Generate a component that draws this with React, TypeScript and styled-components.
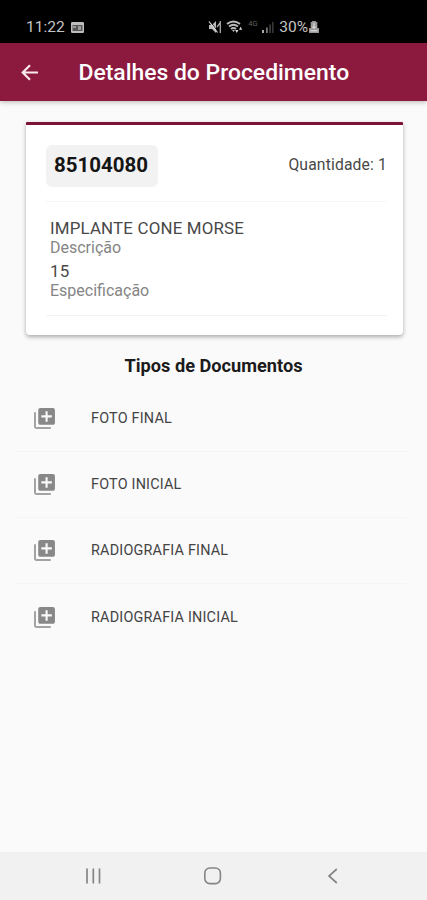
import React from "react";
import styled, { createGlobalStyle } from "styled-components";

const Global = createGlobalStyle`
  * { box-sizing: border-box; }
  html, body { margin: 0; padding: 0; }
  body { font-family: Roboto, "Liberation Sans", sans-serif; background: #fafafa; }
`;

const Screen = styled.div`
  width: 427px;
  height: 900px;
  display: flex;
  flex-direction: column;
  background: #fafafa;
  overflow: hidden;
`;

const StatusBar = styled.div`
  height: 43px;
  flex: none;
  display: flex;
  align-items: center;
  padding: 11px 108px 0 26px;
  background: #000;
  color: #c4c4c4;
`;

const Clock = styled.span`
  font-size: 15.5px;
  line-height: 18px;
  letter-spacing: 0.05px;
  margin-right: 6px;
`;

const StatusIcons = styled.div`
  display: flex;
  align-items: center;
  margin-left: auto;
`;

const StatusSvg = styled.svg<{ $gap?: number }>`
  display: block;
  flex: none;
  margin-right: ${(p) => p.$gap ?? 0}px;
`;

const Network = styled.span`
  width: 11px;
  margin-right: 3px;
  font-size: 7.5px;
  line-height: 8px;
  padding-bottom: 7px;
  color: #606060;
`;

const Battery = styled.span`
  font-size: 15.5px;
  line-height: 18px;
  margin-right: 1px;
`;

const AppBar = styled.header`
  height: 58px;
  flex: none;
  display: flex;
  align-items: center;
  padding-left: 18px;
  background: #8c1a3f;
  color: #fff;
  box-shadow: 0 1px 5px rgba(0, 0, 0, 0.28);
  z-index: 1;
`;

const Title = styled.h1`
  margin: 2px 0 0 36.5px;
  font-size: 22.9px;
  line-height: 28px;
  font-weight: 500;
  white-space: nowrap;
`;

const Content = styled.main`
  flex: 1;
  display: flex;
  flex-direction: column;
`;

const Card = styled.section`
  height: 213px;
  margin: 21px 24px 0 26px;
  padding: 20px 16px 0 20px;
  background: #fff;
  border-top: 3px solid #7c1238;
  border-radius: 1px 1px 4px 4px;
  box-shadow: 0 2px 4px rgba(0, 0, 0, 0.32);
`;

const CardTop = styled.div`
  height: 57px;
  display: flex;
  align-items: flex-start;
  justify-content: space-between;
  border-bottom: 1px solid #f6f6f6;
`;

const Code = styled.div`
  width: 112px;
  height: 42px;
  padding-right: 2px;
  border-radius: 6px;
  background: #f2f2f2;
  color: #151515;
  font-size: 20.5px;
  line-height: 41px;
  font-weight: 700;
  text-align: center;
`;

const Quantity = styled.div`
  font-size: 15.7px;
  letter-spacing: 0.15px;
  line-height: 39px;
  color: #484848;
  white-space: nowrap;
`;

const Details = styled.dl`
  display: flex;
  flex-direction: column;
  height: 114px;
  margin: 0;
  padding: 16px 0 0 4px;
  border-bottom: 1px solid #f3f3f3;
`;

const Field = styled.div`
  display: flex;
  flex-direction: column-reverse;
  height: 42.5px;
  justify-content: flex-end;
`;

const Label = styled.dt`
  font-size: 16px;
  line-height: 20px;
  color: #858585;
`;

const Value = styled.dd`
  margin: 0;
  font-size: 16.9px;
  letter-spacing: 0.17px;
  line-height: 20px;
  color: #484848;
`;

const SectionTitle = styled.h2`
  margin: 20px 0 8.5px;
  font-size: 18.2px;
  line-height: 22px;
  font-weight: 700;
  text-align: center;
  color: #1b1b1b;
`;

const List = styled.ul`
  list-style: none;
  margin: 0 20px 0 16px;
  padding: 0;
`;

const Item = styled.li`
  height: 66.3px;
  display: flex;
  align-items: center;
  padding-left: 17px;
  gap: 35px;
  font-size: 14.4px;
  letter-spacing: 0.2px;
  color: #444;
  border-bottom: 1px solid #f4f4f4;
  &:last-child { border-bottom-color: transparent; }
`;

const NavBar = styled.nav`
  height: 48px;
  flex: none;
  display: grid;
  grid-template-columns: 120px 120px 120px;
  justify-content: center;
  justify-items: center;
  align-items: center;
  padding-right: 1px;
  background: #f1f1f1;
`;

const LibraryAdd = () => (
  <svg width="23" height="23" viewBox="1 1 22 22">
    <path d="M2.9 6v14q0 1.1 1.1 1.1h14" fill="none" stroke="#a3a3a3" strokeWidth="1.9" />
    <path
      fill="#888"
      d="M20 2H8c-1.1 0-2 .9-2 2v12c0 1.1.9 2 2 2h12c1.1 0 2-.9 2-2V4c0-1.1-.9-2-2-2zm-1 9h-4v4h-2v-4H9V9h4V5h2v4h4v2z"
    />
  </svg>
);

const documents = ["FOTO FINAL", "FOTO INICIAL", "RADIOGRAFIA FINAL", "RADIOGRAFIA INICIAL"];

export default function App() {
  return (
    <>
      <Global />
      <Screen>
        <StatusBar>
          <Clock>11:22</Clock>
          <StatusSvg width="13" height="11" viewBox="0 0 13 11">
            <rect width="13" height="11" rx="1.2" fill="#bdbdbd" />
            <path d="M1.5 3h10v6h-10z" fill="#555" />
            <path d="M2 4h3v2H2zM7 4h3v4H7z" fill="#999" />
          </StatusSvg>
          <StatusIcons>
            <StatusSvg $gap={4} width="14" height="14" viewBox="0 0 14 14">
              <path d="M1 5h3l4-4v12L4 9H1z" fill="#bbb" />
              <path d="M1.8 0.8l9 12" stroke="#000" strokeWidth="0.8" />
              <path d="M1 1.5l8.5 11" stroke="#ddd" strokeWidth="1.2" />
              <path d="M9 7l3-4M12.3 1v12" stroke="#aaa" strokeWidth="1.3" />
            </StatusSvg>
            <StatusSvg $gap={5} width="17" height="14" viewBox="0 0 17 14">
              <path d="M1 4q6.5-5 13 0M3 6.5q4.5-3.5 9 0M5 9q2.5-2 5 0" fill="none" stroke="#bbb" strokeWidth="1.9" />
              <path d="M6 10h3l-1.5 2z" fill="#bbb" />
              <path d="M9.2 10h3.2l-1.6 3zM13 9.8h3.2l-1.6-3z" fill="#ddd" />
            </StatusSvg>
            <Network>4G</Network>
            <StatusSvg $gap={5} width="12" height="12" viewBox="0 0 12 12">
              <path d="M0 9h2v3H0z" fill="#aaa" />
              <path d="M4 6.5h1.8V12H4z" fill="#777" />
              <path d="M7.3 3.5h1.5V12H7.3zM10.2 1h1.3v11h-1.3z" fill="#444" />
            </StatusSvg>
            <Battery>30%</Battery>
            <StatusSvg width="10" height="12" viewBox="0 0 10 12">
              <path d="M3 0h4v1h1.3v6H10v5H0V7h1.7V1H3z" fill="#999" />
              <path d="M5 2v5M3 5.5l2 2 2-2M1.5 9.8h7" fill="none" stroke="#eee" strokeWidth="1" />
            </StatusSvg>
          </StatusIcons>
        </StatusBar>
        <AppBar>
          <svg width="24" height="24" viewBox="0 0 24 24" fill="none" stroke="#f7e9ee" strokeWidth="2.2">
            <path d="M20 12.5H5M12 5.2L4.7 12.5l7.3 7.3" />
          </svg>
          <Title>Detalhes do Procedimento</Title>
        </AppBar>
        <Content>
          <Card>
            <CardTop>
              <Code>85104080</Code>
              <Quantity>Quantidade: 1</Quantity>
            </CardTop>
            <Details>
              <Field>
                <Label>Descrição</Label>
                <Value>IMPLANTE CONE MORSE</Value>
              </Field>
              <Field>
                <Label>Especificação</Label>
                <Value>15</Value>
              </Field>
            </Details>
          </Card>
          <SectionTitle>Tipos de Documentos</SectionTitle>
          <List>
            {documents.map((name) => (
              <Item key={name}>
                <LibraryAdd />
                <span>{name}</span>
              </Item>
            ))}
          </List>
        </Content>
        <NavBar>
          <svg width="18" height="18" viewBox="0 0 18 18" fill="none" stroke="#858585" strokeWidth="1.7">
            <path d="M3 1.5v15M9.3 1.5v15M15.5 1.5v15" />
          </svg>
          <svg width="20" height="20" viewBox="0 0 20 20" fill="none" stroke="#858585" strokeWidth="1.6">
            <rect x="1.8" y="2" width="15.6" height="15.6" rx="5" />
          </svg>
          <svg width="18" height="18" viewBox="0 0 18 18" fill="none" stroke="#858585" strokeWidth="1.7">
            <path d="M12.8 2L5 9l7.8 7" />
          </svg>
        </NavBar>
      </Screen>
    </>
  );
}
